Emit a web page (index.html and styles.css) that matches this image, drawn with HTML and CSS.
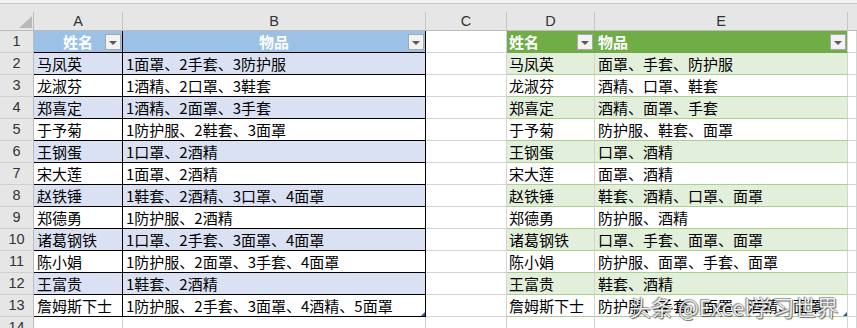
FILE: index.html
```html
<!DOCTYPE html>
<html lang="zh-CN">
<head>
<meta charset="utf-8">
<title>Excel</title>
<link rel="stylesheet" href="styles.css">
</head>
<body>
<div class="topbar"></div>
<div class="pad"></div>
<div class="sheet">
  <div class="corner"><span class="tri"></span></div>
  <div class="ch">A</div><div class="ch">B</div><div class="ch">C</div><div class="ch">D</div><div class="ch">E</div><div class="ch last"></div>

  <div class="rh">1</div>
  <div class="c t1 t1h center">姓名<span class="dd"></span></div>
  <div class="c t1 t1h center">物品<span class="dd"></span></div>
  <div class="c"></div>
  <div class="c t2 t2h dcol">姓名<span class="dd"></span></div>
  <div class="c t2 t2h">物品<span class="dd"></span></div>
  <div class="c"></div>

  <div class="rh">2</div>
  <div class="c t1 b1">马凤英</div><div class="c t1 b1">1面罩、2手套、3防护服</div><div class="c"></div>
  <div class="c t2 g1 dcol">马凤英</div><div class="c t2 g1">面罩、手套、防护服</div><div class="c"></div>

  <div class="rh">3</div>
  <div class="c t1">龙淑芬</div><div class="c t1">1酒精、2口罩、3鞋套</div><div class="c"></div>
  <div class="c t2 dcol">龙淑芬</div><div class="c t2">酒精、口罩、鞋套</div><div class="c"></div>

  <div class="rh">4</div>
  <div class="c t1 b1">郑喜定</div><div class="c t1 b1">1酒精、2面罩、3手套</div><div class="c"></div>
  <div class="c t2 g1 dcol">郑喜定</div><div class="c t2 g1">酒精、面罩、手套</div><div class="c"></div>

  <div class="rh">5</div>
  <div class="c t1">于予菊</div><div class="c t1">1防护服、2鞋套、3面罩</div><div class="c"></div>
  <div class="c t2 dcol">于予菊</div><div class="c t2">防护服、鞋套、面罩</div><div class="c"></div>

  <div class="rh">6</div>
  <div class="c t1 b1">王钢蛋</div><div class="c t1 b1">1口罩、2酒精</div><div class="c"></div>
  <div class="c t2 g1 dcol">王钢蛋</div><div class="c t2 g1">口罩、酒精</div><div class="c"></div>

  <div class="rh">7</div>
  <div class="c t1">宋大莲</div><div class="c t1">1面罩、2酒精</div><div class="c"></div>
  <div class="c t2 dcol">宋大莲</div><div class="c t2">面罩、酒精</div><div class="c"></div>

  <div class="rh">8</div>
  <div class="c t1 b1">赵铁锤</div><div class="c t1 b1">1鞋套、2酒精、3口罩、4面罩</div><div class="c"></div>
  <div class="c t2 g1 dcol">赵铁锤</div><div class="c t2 g1">鞋套、酒精、口罩、面罩</div><div class="c"></div>

  <div class="rh">9</div>
  <div class="c t1">郑德勇</div><div class="c t1">1防护服、2酒精</div><div class="c"></div>
  <div class="c t2 dcol">郑德勇</div><div class="c t2">防护服、酒精</div><div class="c"></div>

  <div class="rh">10</div>
  <div class="c t1 b1">诸葛钢铁</div><div class="c t1 b1">1口罩、2手套、3面罩、4面罩</div><div class="c"></div>
  <div class="c t2 g1 dcol">诸葛钢铁</div><div class="c t2 g1">口罩、手套、面罩、面罩</div><div class="c"></div>

  <div class="rh">11</div>
  <div class="c t1">陈小娟</div><div class="c t1">1防护服、2面罩、3手套、4面罩</div><div class="c"></div>
  <div class="c t2 dcol">陈小娟</div><div class="c t2">防护服、面罩、手套、面罩</div><div class="c"></div>

  <div class="rh">12</div>
  <div class="c t1 b1">王富贵</div><div class="c t1 b1">1鞋套、2酒精</div><div class="c"></div>
  <div class="c t2 g1 dcol">王富贵</div><div class="c t2 g1">鞋套、酒精</div><div class="c"></div>

  <div class="rh">13</div>
  <div class="c t1">詹姆斯下士</div><div class="c t1 handle">1防护服、2手套、3面罩、4酒精、5面罩</div><div class="c"></div>
  <div class="c t2 dcol">詹姆斯下士</div><div class="c t2 handle">防护服、手套、面罩、酒精、面罩</div><div class="c"></div>

  <div class="rh">14</div>
  <div class="c"></div><div class="c"></div><div class="c"></div><div class="c"></div><div class="c"></div><div class="c"></div>
</div>
<div class="watermark">头条 @Excel学习世界</div>
</body>
</html>
```

FILE: styles.css
```css
html, body {
  margin: 0;
  padding: 0;
  background: #ffffff;
  overflow: hidden;
}

body {
  width: 857px;
  height: 328px;
  font-family: "Noto Sans CJK SC", "Noto Sans", sans-serif;
}

.topbar {
  height: 3px;
  background: #f3f3f3;
  border-bottom: 1px solid #c6c6c6;
}

.pad {
  height: 8px;
  background: #e6e6e6;
}

.sheet {
  display: grid;
  grid-template-columns: 34px 89px 303px 81px 88px 253px 1fr;
  grid-template-rows: 19px;
  grid-auto-rows: 22px;
}

.sheet > div {
  box-sizing: border-box;
  border-right: 1px solid #d4d4d4;
  border-bottom: 1px solid #d4d4d4;
  white-space: nowrap;
  overflow: hidden;
}

.corner {
  background: #e6e6e6;
  position: relative;
  border-right-color: #bcbcbc !important;
  border-bottom-color: #bcbcbc !important;
}

.tri {
  position: absolute;
  right: 1px;
  bottom: 2px;
  width: 0;
  height: 0;
  border-left: 13px solid transparent;
  border-bottom: 12px solid #b9b9b9;
}

.ch {
  background: #e6e6e6;
  border-right-color: #c6c6c6 !important;
  border-bottom-color: #bcbcbc !important;
  font-family: "Liberation Sans", Arial, sans-serif;
  font-size: 14.5px;
  line-height: 18px;
  color: #333333;
  text-align: center;
}

.ch.last {
  border-right: none !important;
}

.rh {
  background: #e6e6e6;
  border-right-color: #bcbcbc !important;
  border-bottom-color: #d0d0d0 !important;
  font-family: "Liberation Sans", Arial, sans-serif;
  font-size: 14.5px;
  line-height: 21px;
  color: #333333;
  text-align: center;
}

.c {
  font-size: 15px;
  line-height: 21px;
  color: #000000;
  padding: 0 3px;
}

.center {
  text-align: center;
}

/* Table 1 : blue with black borders */
.t1 {
  border-right-color: #000000 !important;
  border-bottom-color: #000000 !important;
}

.t1h {
  background: #9bc2e6;
  color: #ffffff;
  font-weight: 700;
  position: relative;
}

.b1 {
  background: #d9e1f2;
}

/* Table 2 : green */
.t2 {
  border-bottom-color: #a9d08e !important;
}

.t2h {
  background: #70ad47;
  color: #ffffff;
  font-weight: 700;
  position: relative;
  border-bottom-color: #70ad47 !important;
}

.t2h.dcol {
  border-right-color: #70ad47 !important;
}

.g1 {
  background: #e2efda;
}

.dcol {
  padding-left: 2px;
}

/* filter dropdown buttons */
.dd {
  position: absolute;
  right: 1px;
  top: 3px;
  width: 16px;
  height: 16px;
  box-sizing: border-box;
  border: 1px solid #a8a8a8;
  background: #f2f2f2;
  display: flex;
  align-items: center;
  justify-content: center;
}

.dd::after {
  content: "";
  width: 0;
  height: 0;
  border-left: 4px solid transparent;
  border-right: 4px solid transparent;
  border-top: 4px solid #595959;
  margin-top: 1px;
}

/* table resize handle */
.handle {
  position: relative;
}

.handle::after {
  content: "";
  position: absolute;
  right: 0;
  bottom: 0;
  width: 0;
  height: 0;
  border-left: 4px solid transparent;
  border-bottom: 4px solid #2f5597;
}

.watermark {
  position: absolute;
  left: 629px;
  top: 294px;
  font-family: "Noto Sans CJK SC", "Noto Sans", sans-serif;
  font-size: 22px;
  line-height: 24px;
  color: rgba(255, 255, 255, 0.92);
  white-space: nowrap;
  text-shadow:
    0 0 1px #3a3a3a,
    1px 1px 1px rgba(0, 0, 0, 0.55),
    -1px -1px 1px rgba(0, 0, 0, 0.35);
}
```
